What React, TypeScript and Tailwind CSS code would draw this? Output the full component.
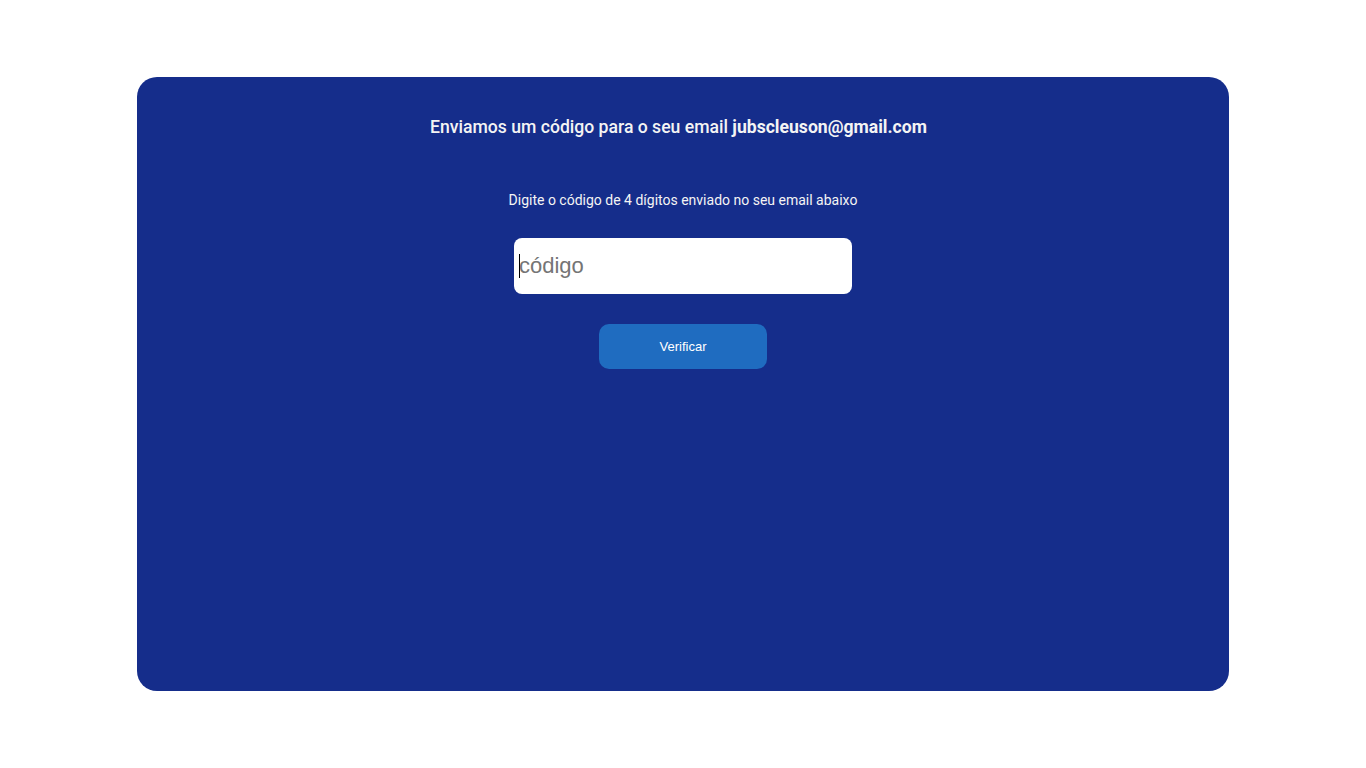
import React from 'react';

const App: React.FC = () => {
  return (
    <div className="w-full h-screen bg-white flex items-center justify-center">
      <div className="w-[80vw] h-[80vh] bg-[#152d8b] rounded-[20px] flex flex-col items-center pt-[40px] font-['Roboto',sans-serif] text-[#f4f4f4]">
        <h2 className="text-[17.6px] leading-[21px] font-medium pr-[9px]">
          Enviamos um código para o seu email <span className="font-bold">jubscleuson@gmail.com</span>
        </h2>
        <p className="mt-[54px] text-[14px] leading-[16px]">Digite o código de 4 dígitos enviado no seu email abaixo</p>
        <div className="relative mt-[30px]">
          <input
            type="text"
            placeholder="código"
            className="w-[338px] h-[56px] rounded-[8px] bg-white pl-[5px] pr-[4px] text-[22px] text-black placeholder:text-[#757575] font-['Liberation_Sans',Arial,sans-serif] outline-none"
          />
          <span className="absolute left-[5px] top-[16px] w-px h-[24px] bg-black" />
        </div>
        <button className="mt-[30px] w-[168px] h-[45px] rounded-[10px] bg-[#1f6cc0] text-[13px] text-white font-['Liberation_Sans',Arial,sans-serif]">
          Verificar
        </button>
      </div>
    </div>
  );
};

export default App;
